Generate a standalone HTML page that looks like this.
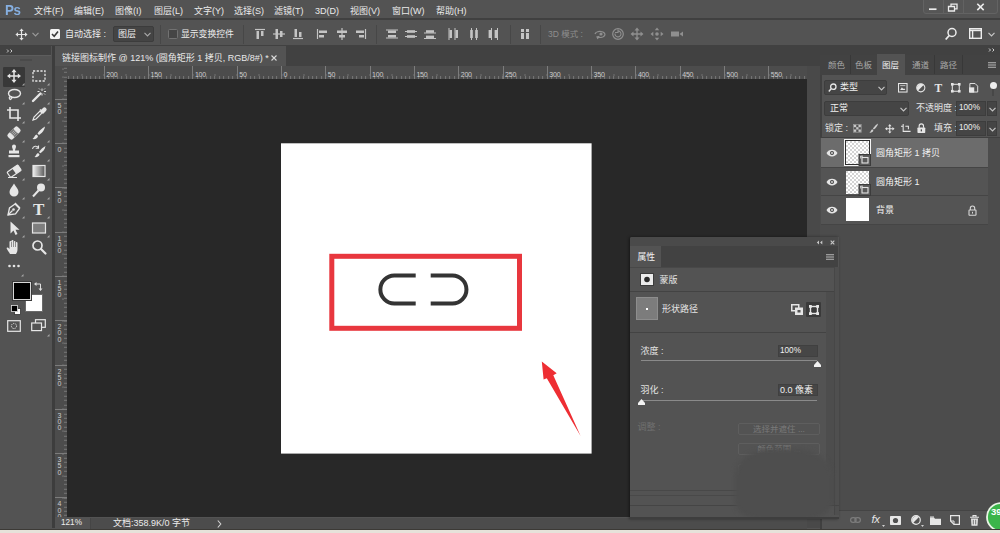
<!DOCTYPE html>
<html lang="zh-CN">
<head>
<meta charset="utf-8">
<title>链接图标制作</title>
<style>
*{box-sizing:border-box;margin:0;padding:0}
html,body{width:1000px;height:533px;overflow:hidden;background:#535353}
body{position:relative;font-family:"Liberation Sans","Noto Sans CJK SC",sans-serif;font-size:11px;color:#e0e0e0;-webkit-font-smoothing:antialiased}
.abs{position:absolute}
.t{position:absolute;white-space:nowrap;line-height:1}
svg{position:absolute;overflow:visible}
/* ---------- menubar ---------- */
#menubar{left:0;top:0;width:1000px;height:20px;background:#535353;border-bottom:2px solid #404040}
#menubar .t{top:6.500px;font-size:9px;color:#eaeaea}
#pslogo{left:5px;top:2px !important;font-size:15.500px !important;font-weight:bold;color:#86afe0 !important;letter-spacing:-0.5px;transform:scaleX(.86);transform-origin:0 0}
.winbtn{top:0;width:24px;height:15px;background:#5b5b5b;border-left:1px solid #4a4a4a}
/* ---------- options ---------- */
#options{left:0;top:20px;width:1000px;height:26px;background:#535353;border-bottom:1.500px solid #414141}
/* ---------- tab bar ---------- */
#tabbar{left:55px;top:46px;width:752px;height:21px;background:#414141}
#doctab{left:0;top:0;width:231px;height:21px;background:#535353}
/* ---------- tools ---------- */
#tools{left:0;top:46px;width:55px;height:482px;background:#535353}
/* ---------- canvas ---------- */
#hruler{left:55px;top:66px;width:752px;height:13px;background:#4c4c4c;overflow:hidden}
#vruler{left:55px;top:66px;width:12px;height:451px;background:#4c4c4c;overflow:hidden}
.rl{font-size:7px;color:#cdcdcd;letter-spacing:-0.2px}
.hticks{left:0;top:10px;width:752px;height:3px;background:repeating-linear-gradient(90deg,#767676 0,#767676 1px,transparent 1px,transparent 4.43px);background-position:0.1px 0}
.hticks2{left:0;top:8px;width:752px;height:2px;background:repeating-linear-gradient(90deg,#707070 0,#707070 1px,transparent 1px,transparent 22.15px);background-position:4.5px 0}
.vticks{left:9px;top:0;width:3px;height:451px;background:repeating-linear-gradient(180deg,#767676 0,#767676 1px,transparent 1px,transparent 4.43px);background-position:0 1.8px}
.vticks2{left:7px;top:0;width:2px;height:451px;background:repeating-linear-gradient(180deg,#707070 0,#707070 1px,transparent 1px,transparent 22.15px);background-position:0 10.600px}
#paste{left:67px;top:79px;width:740px;height:438px;background:#282828}
#doc{left:281px;top:144px;width:310px;height:309px;background:#fff}
#status{left:55px;top:517.500px;width:752px;height:11px;background:#4c4c4c}
#bottom{left:0;top:528.500px;width:1000px;height:5px;background:#e6e2da;border-top:1.500px solid #3c3a36}
/* ---------- right dock ---------- */
#gap{left:807px;top:46px;width:13px;height:482px;background:#494949}
#dock{left:820px;top:46px;width:180px;height:482px;background:#535353}
.dt{top:15px;font-size:8.500px;color:#a9a9a9}
/* ---------- properties ---------- */
#props{left:630px;top:237px;width:209px;overflow:hidden;border-radius:2px 0 0 0;height:281.500px;background:#535353;border-bottom:2px solid #3e3e3e;box-shadow:-1px 0 3px rgba(0,0,0,.45)}
.btn{width:82px;height:12px;border:1px solid #5e5e5e;border-radius:2px;font-size:8.500px;line-height:10px;text-align:center;color:#7a7a7a;white-space:nowrap}
</style>
</head>
<body>
<div id="menubar" class="abs">
<span class="t" id="pslogo">Ps</span>
<span class="t" style="left:34px">文件(F)</span>
<span class="t" style="left:74px">编辑(E)</span>
<span class="t" style="left:115px">图像(I)</span>
<span class="t" style="left:154px">图层(L)</span>
<span class="t" style="left:194px">文字(Y)</span>
<span class="t" style="left:234px">选择(S)</span>
<span class="t" style="left:274px">滤镜(T)</span>
<span class="t" style="left:315px">3D(D)</span>
<span class="t" style="left:350px">视图(V)</span>
<span class="t" style="left:392px">窗口(W)</span>
<span class="t" style="left:436px">帮助(H)</span>
<div class="abs" style="left:922.500px;top:-1px;width:75px;height:15px;border:1px solid #636363;border-radius:0 0 3px 3px;background:#565656"></div>
<div class="abs" style="left:943px;top:0;width:1px;height:14px;background:#626262"></div>
<div class="abs" style="left:963px;top:0;width:1px;height:14px;background:#626262"></div>
<svg style="left:923px;top:0" width="75" height="15" viewBox="923 0 75 15"><path d="M929 9.200h7.500" stroke="#ececec" stroke-width="1.700" fill="none"/><path d="M948.500 6.500h6v4.500h-6zM951 6.500v-2.300h6v4.600h-2.500" stroke="#ececec" stroke-width="1.300" fill="none"/><path d="M977.300 3.700l6.400 6.400M983.700 3.700l-6.400 6.400" stroke="#ececec" stroke-width="1.600" fill="none"/></svg>
</div>
<div id="options" class="abs"><div class="abs" style="left:0;top:0.500px;width:1000px;height:24px">
<svg style="left:15px;top:7px" width="13" height="13" viewBox="0 0 15 15"><path d="M7.5 0.500l2.500 3h-5zM7.500 14.500l2.500-3h-5zM0.500 7.500l3-2.500v5zM14.500 7.500l-3-2.500v5z" fill="#e4e4e4"/><path d="M7.500 3v9M3 7.500h9" stroke="#e4e4e4" stroke-width="1.400"/></svg>
<svg style="left:32px;top:11px" width="7" height="5" viewBox="0 0 7 5"><path d="M0.500 0.800l3 3 3-3" stroke="#9a9a9a" stroke-width="1.200" fill="none"/></svg>
<div class="abs" style="left:50px;top:8px;width:10px;height:10px;background:#f4f4f4;border-radius:1.500px"></div>
<svg style="left:50px;top:8px" width="10" height="10" viewBox="0 0 10 10"><path d="M2 5l2.200 2.300l3.800-4.800" stroke="#3a3a3a" stroke-width="1.600" fill="none"/></svg>
<span class="t" style="left:65px;top:9px;font-size:9px;color:#ededed">自动选择 :</span>
<div class="abs" style="left:113px;top:5px;width:41px;height:16px;background:#444;border:1px solid #3c3c3c;border-radius:2px"></div>
<span class="t" style="left:118px;top:9px;font-size:9px;color:#ededed">图层</span>
<svg style="left:144px;top:11px" width="7" height="5" viewBox="0 0 7 5"><path d="M0.500 0.800l3 3 3-3" stroke="#a8a8a8" stroke-width="1.200" fill="none"/></svg>
<div class="abs" style="left:160px;top:4px;width:1px;height:19px;background:#474747"></div>
<div class="abs" style="left:168px;top:8px;width:10px;height:10px;background:#454545;border:1px solid #727272;border-radius:1.500px"></div>
<span class="t" style="left:181px;top:9px;font-size:8.800px;color:#ededed">显示变换控件</span>
<div class="abs" style="left:243px;top:4px;width:1px;height:19px;background:#474747"></div>
<div class="abs" style="left:376px;top:4px;width:1px;height:19px;background:#474747"></div>
<div class="abs" style="left:510px;top:4px;width:1px;height:19px;background:#474747"></div>
<div class="abs" style="left:540px;top:4px;width:1px;height:19px;background:#474747"></div>
<svg style="left:253px;top:6px" width="14" height="14" viewBox="0 0 14 14"><path d="M2 2.5h10" stroke="#c4c4c4" stroke-width="1.2"/><rect x="3.5" y="4" width="2.5" height="8" fill="#c4c4c4"/><rect x="8" y="4" width="2.5" height="5" fill="#c4c4c4"/></svg><svg style="left:272px;top:6px" width="14" height="14" viewBox="0 0 14 14"><path d="M1 7h12" stroke="#c4c4c4" stroke-width="1.2"/><rect x="3.5" y="2" width="2.5" height="10" fill="#c4c4c4"/><rect x="8" y="4" width="2.5" height="6" fill="#c4c4c4"/></svg><svg style="left:291px;top:6px" width="14" height="14" viewBox="0 0 14 14"><path d="M2 11.5h10" stroke="#c4c4c4" stroke-width="1.2"/><rect x="3.5" y="2" width="2.5" height="8" fill="#c4c4c4"/><rect x="8" y="5" width="2.5" height="5" fill="#c4c4c4"/></svg><svg style="left:315px;top:6px" width="14" height="14" viewBox="0 0 14 14"><path d="M2.5 2v10" stroke="#c4c4c4" stroke-width="1.2"/><rect x="4" y="3.5" width="8" height="2.5" fill="#c4c4c4"/><rect x="4" y="8" width="5" height="2.5" fill="#c4c4c4"/></svg><svg style="left:335px;top:6px" width="14" height="14" viewBox="0 0 14 14"><path d="M7 1v12" stroke="#c4c4c4" stroke-width="1.2"/><rect x="2" y="3.5" width="10" height="2.5" fill="#c4c4c4"/><rect x="4" y="8" width="6" height="2.5" fill="#c4c4c4"/></svg><svg style="left:354px;top:6px" width="14" height="14" viewBox="0 0 14 14"><path d="M11.5 2v10" stroke="#c4c4c4" stroke-width="1.2"/><rect x="2" y="3.5" width="8" height="2.5" fill="#c4c4c4"/><rect x="5" y="8" width="5" height="2.5" fill="#c4c4c4"/></svg><svg style="left:385px;top:6px" width="14" height="14" viewBox="0 0 14 14"><path d="M1 3h12M1 11h12" stroke="#c4c4c4" stroke-width="1"/><rect x="3" y="3.5" width="8" height="2.5" fill="#c4c4c4"/><rect x="3" y="8" width="8" height="2.5" fill="#c4c4c4"/></svg><svg style="left:404px;top:6px" width="14" height="14" viewBox="0 0 14 14"><path d="M1 4.5h12M1 9.5h12" stroke="#c4c4c4" stroke-width="1"/><rect x="3" y="3.2" width="8" height="2.6" fill="#c4c4c4"/><rect x="3" y="8.2" width="8" height="2.6" fill="#c4c4c4"/></svg><svg style="left:423px;top:6px" width="14" height="14" viewBox="0 0 14 14"><path d="M1 6h12M1 11.5h12" stroke="#c4c4c4" stroke-width="1"/><rect x="3" y="3.2" width="8" height="2.6" fill="#c4c4c4"/><rect x="3" y="8.6" width="8" height="2.6" fill="#c4c4c4"/></svg><svg style="left:446px;top:6px" width="14" height="14" viewBox="0 0 14 14"><path d="M3 1v12M9 1v12" stroke="#c4c4c4" stroke-width="1"/><rect x="3.5" y="3" width="2.5" height="8" fill="#c4c4c4"/><rect x="9.5" y="3" width="2.5" height="8" fill="#c4c4c4"/></svg><svg style="left:467px;top:6px" width="14" height="14" viewBox="0 0 14 14"><path d="M4.5 1v12M9.5 1v12" stroke="#c4c4c4" stroke-width="1"/><rect x="3.2" y="3" width="2.6" height="8" fill="#c4c4c4"/><rect x="8.2" y="3" width="2.6" height="8" fill="#c4c4c4"/></svg><svg style="left:486px;top:6px" width="14" height="14" viewBox="0 0 14 14"><path d="M5.5 1v12M11.5 1v12" stroke="#c4c4c4" stroke-width="1"/><rect x="2.6" y="3" width="2.6" height="8" fill="#c4c4c4"/><rect x="8.6" y="3" width="2.6" height="8" fill="#c4c4c4"/></svg><svg style="left:518px;top:6px" width="14" height="14" viewBox="0 0 14 14"><rect x="3" y="2" width="3" height="3" fill="#c4c4c4"/><rect x="8" y="2" width="3" height="3" fill="#c4c4c4"/><rect x="3" y="6" width="3" height="6" fill="#c4c4c4"/><rect x="8" y="6" width="3" height="6" fill="#c4c4c4"/></svg><svg style="left:593px;top:6px" width="14" height="14" viewBox="0 0 14 14"><path d="M2 7a5 3 0 1 1 3 3.2M5 12l-1-2 2.3-.6" stroke="#8f8f8f" stroke-width="1.2" fill="none"/><circle cx="8" cy="7" r="1.6" fill="#8f8f8f"/></svg><svg style="left:611px;top:6px" width="14" height="14" viewBox="0 0 14 14"><circle cx="7" cy="7" r="5.3" stroke="#8f8f8f" stroke-width="1.2" fill="none"/><path d="M4 6.5a3 3 0 1 0 3-2.6M7 2.5v3h-3" stroke="#8f8f8f" stroke-width="1.1" fill="none"/></svg><svg style="left:630px;top:6px" width="14" height="14" viewBox="0 0 14 14"><path d="M7 0.5l2.5 3h-5zM7 13.5l2.5-3h-5zM0.5 7l3-2.5v5zM13.5 7l-3-2.5v5z" fill="#8f8f8f"/><path d="M7 3v8M3 7h8" stroke="#8f8f8f" stroke-width="1.3"/></svg><svg style="left:650px;top:6px" width="14" height="14" viewBox="0 0 14 14"><path d="M7 0.5l2.2 2.8h-4.4zM7 13.5l2.2-2.8h-4.4zM0.5 7l2.8-2.2v4.4zM13.500 7l-2.800-2.200v4.400z" fill="#8f8f8f"/><circle cx="7" cy="7" r="1.8" fill="#8f8f8f"/></svg><svg style="left:670px;top:6px" width="14" height="14" viewBox="0 0 14 14"><path d="M1 4.500h8v5h-8z" fill="#8f8f8f"/><path d="M9.500 7l3.500-2.500v5z" fill="#8f8f8f"/></svg>
<span class="t" style="left:548px;top:9px;font-size:8.500px;color:#8e8e8e">3D 模式 :</span>
<svg style="left:944px;top:6px" width="14" height="14" viewBox="0 0 14 14"><circle cx="8" cy="5.500" r="4" stroke="#ececec" stroke-width="1.500" fill="none"/><path d="M5.200 8.500l-3.500 4" stroke="#ececec" stroke-width="1.800"/></svg>
<svg style="left:969px;top:7px" width="13" height="12" viewBox="0 0 13 12"><rect x="0.700" y="0.700" width="11.600" height="9.600" stroke="#ececec" stroke-width="1.400" fill="none"/><path d="M1 2.400h11" stroke="#ececec" stroke-width="1.600"/><path d="M3.600 2v8" stroke="#ececec" stroke-width="1.400"/></svg>
<svg style="left:988px;top:11px" width="7" height="5" viewBox="0 0 7 5"><path d="M0.500 0.800l3 3 3-3" stroke="#c8c8c8" stroke-width="1.200" fill="none"/></svg>
</div></div>
<div id="tools" class="abs">
<div class="abs" style="left:0;top:0;width:51px;height:9px;background:#424242"></div>
<svg style="left:6px;top:3px" width="8" height="4" viewBox="0 0 8 4"><path d="M1 0.500l1.500 1.500l-1.500 1.500M4.500 0.500l1.500 1.500l-1.500 1.500" stroke="#c8c8c8" stroke-width="1" fill="none"/></svg>
<div class="abs" style="left:0;top:9px;width:51px;height:1px;background:#5d5d5d"></div>
<div class="abs" style="left:20px;top:13px;width:12px;height:2px;background:#4a4a4a"></div>
<div class="abs" style="left:3px;top:21px;width:22px;height:20px;background:#383838;border-radius:1px"></div>
<svg style="left:6.0px;top:22.0px" width="16" height="16" viewBox="0 0 16 16"><path d="M8 1l2.600 3.200h-5.200zM8 15l2.600-3.200h-5.200zM1 8l3.200-2.600v5.200zM15 8l-3.200-2.600v5.200z" fill="#e6e6e6"/><path d="M8 3.500v9M3.500 8h9" stroke="#e6e6e6" stroke-width="1.500"/></svg><svg style="left:31.0px;top:22.0px" width="16" height="16" viewBox="0 0 16 16"><rect x="2" y="3" width="12" height="10" stroke="#e6e6e6" stroke-width="1.300" fill="none" stroke-dasharray="2.200 1.500"/></svg><svg style="left:6.0px;top:41.0px" width="16" height="16" viewBox="0 0 16 16"><ellipse cx="8.500" cy="6.500" rx="6" ry="4" stroke="#e6e6e6" stroke-width="1.400" fill="none"/><path d="M4.500 9.500c-1.500 1-1.500 3 0.500 3.200M4.500 9.500a1.300 1.300 0 1 0 0.100 0" stroke="#e6e6e6" stroke-width="1.200" fill="none"/></svg><svg style="left:31.0px;top:41.0px" width="16" height="16" viewBox="0 0 16 16"><path d="M2 14l7.500-7.500" stroke="#e6e6e6" stroke-width="2.400" stroke-linecap="round"/><path d="M11 1.500v2.500M11 6.500v2M8.500 4.500h-2M13 4.500h2M13 2.500l1-1M13 6.500l1 1M9 2.500l-1-1" stroke="#e6e6e6" stroke-width="1"/></svg><svg style="left:6.0px;top:60.0px" width="16" height="16" viewBox="0 0 16 16"><path d="M4 1v11h11M1 4h11v11" stroke="#e6e6e6" stroke-width="1.600" fill="none"/></svg><svg style="left:31.0px;top:60.0px" width="16" height="16" viewBox="0 0 16 16"><path d="M2 14l1-3 6-6 2 2-6 6z" stroke="#e6e6e6" stroke-width="1.200" fill="none"/><path d="M9 3.500l3.500 3.500M10 5l2.500-2.500a1.400 1.400 0 0 1 2 2l-2.500 2.500z" stroke="#e6e6e6" stroke-width="1.400" fill="#e6e6e6"/></svg><svg style="left:6.0px;top:79.0px" width="16" height="16" viewBox="0 0 16 16"><g transform="rotate(-45 8 8)"><rect x="1" y="4.500" width="14" height="7" rx="2" fill="#e6e6e6"/><rect x="5.500" y="4.500" width="5" height="7" fill="#777"/><path d="M6.500 6.500h0.010M8 6.500h0.010M9.500 6.500h0.010M6.500 8h0.010M8 8h0.010M9.500 8h0.010M6.500 9.500h0.010M8 9.500h0.010M9.500 9.500h0.010" stroke="#e6e6e6" stroke-width="0.900" stroke-linecap="round"/></g></svg><svg style="left:31.0px;top:79.0px" width="16" height="16" viewBox="0 0 16 16"><path d="M14 1.500c-3 1.500-6 4.500-7.500 7l1.500 1.500c2.500-1.500 5.500-4.500 6-8.500z" fill="#e6e6e6"/><path d="M5.500 9.500c-2 0.500-2 3-4 4.500c2.500 0.500 5.500-0.500 5.500-3z" fill="#e6e6e6"/></svg><svg style="left:6.0px;top:98.0px" width="16" height="16" viewBox="0 0 16 16"><path d="M6 2.500a2 2 0 0 1 4 0c0 1.500-1 2.500-1 4h4v3h-10v-3h4c0-1.500-1-2.500-1-4z" fill="#e6e6e6"/><rect x="2.500" y="11" width="11" height="2.200" fill="#e6e6e6"/></svg><svg style="left:31.0px;top:98.0px" width="16" height="16" viewBox="0 0 16 16"><path d="M14.500 2c-2.500 1.200-5 3.800-6.500 6l1.300 1.300c2.200-1.300 4.700-3.800 5.200-7.300z" fill="#e6e6e6"/><path d="M7 9c-1.800 0.500-1.800 2.800-3.500 4c2.200 0.500 5-0.500 5-2.700z" fill="#e6e6e6"/><path d="M1.500 5a3.200 3.200 0 0 1 6 -1M7.500 1.500v2.800h-2.800" stroke="#e6e6e6" stroke-width="1.100" fill="none"/></svg><svg style="left:6.0px;top:117.0px" width="16" height="16" viewBox="0 0 16 16"><g transform="rotate(-35 8 8)"><rect x="1.500" y="5" width="13" height="6.500" rx="1" stroke="#e6e6e6" stroke-width="1.200" fill="none"/><rect x="8" y="5" width="6.500" height="6.500" fill="#e6e6e6"/></g><path d="M2 14.500h9" stroke="#e6e6e6" stroke-width="1"/></svg><svg style="left:31.0px;top:117.0px" width="16" height="16" viewBox="0 0 16 16"><defs><linearGradient id="gg" x1="0" x2="1"><stop offset="0" stop-color="#f0f0f0"/><stop offset="1" stop-color="#555"/></linearGradient></defs><rect x="2" y="2.500" width="12" height="11" fill="url(#gg)" stroke="#e6e6e6" stroke-width="1.200"/></svg><svg style="left:6.0px;top:136.0px" width="16" height="16" viewBox="0 0 16 16"><path d="M8 1.500c2 3.500 4.500 5.500 4.500 8.500a4.500 4.500 0 0 1-9 0c0-3 2.500-5 4.500-8.500z" fill="#e6e6e6"/></svg><svg style="left:31.0px;top:136.0px" width="16" height="16" viewBox="0 0 16 16"><circle cx="10" cy="5.500" r="4" fill="#e6e6e6"/><path d="M7.500 8.500l-5.500 6" stroke="#e6e6e6" stroke-width="2"/></svg><svg style="left:6.0px;top:155.0px" width="16" height="16" viewBox="0 0 16 16"><path d="M2 14l1.500-7 5.500-4 4.500 4.500-4 5.500z" stroke="#e6e6e6" stroke-width="1.300" fill="none"/><circle cx="7.500" cy="8.500" r="1.300" fill="#e6e6e6"/><path d="M2 14l4.500-4.500M9 2l5 5" stroke="#e6e6e6" stroke-width="1.300"/></svg><span class="t" style="left:33px;top:155px;font-family:'Liberation Serif',serif;font-weight:bold;font-size:17px;color:#e6e6e6">T</span><svg style="left:6.0px;top:174.0px" width="16" height="16" viewBox="0 0 16 16"><path d="M4.500 1.500v12l3-3 2 4.500 2-1-2-4.300h4z" fill="#e6e6e6"/></svg><svg style="left:31.0px;top:174.0px" width="16" height="16" viewBox="0 0 16 16"><rect x="1.500" y="3" width="13" height="10" fill="#7e7e7e" stroke="#e6e6e6" stroke-width="1.200"/></svg><svg style="left:6.0px;top:193.0px" width="16" height="16" viewBox="0 0 16 16"><path d="M4 15c-1-2-2.500-3.500-3.500-6c0.800-1 2-0.500 3 1v-7a1 1 0 0 1 2 0v-1a1 1 0 0 1 2 0v1a1 1 0 0 1 2 0v1a1 1 0 0 1 2 0v6c0 2-0.500 3.500-1.500 5z" fill="#e6e6e6"/><path d="M5.500 3v5M7.500 2v6M9.500 3v5" stroke="#535353" stroke-width="0.600"/></svg><svg style="left:31.0px;top:193.0px" width="16" height="16" viewBox="0 0 16 16"><circle cx="6.500" cy="6.500" r="4.500" stroke="#e6e6e6" stroke-width="1.700" fill="none"/><path d="M10 10l4.500 4.500" stroke="#e6e6e6" stroke-width="2.200" stroke-linecap="round"/></svg><svg style="left:22px;top:37px" width="2.500" height="2.500" viewBox="0 0 3 3"><path d="M3 0v3h-3z" fill="#a8a8a8"/></svg><svg style="left:47px;top:37px" width="2.500" height="2.500" viewBox="0 0 3 3"><path d="M3 0v3h-3z" fill="#a8a8a8"/></svg><svg style="left:22px;top:56px" width="2.500" height="2.500" viewBox="0 0 3 3"><path d="M3 0v3h-3z" fill="#a8a8a8"/></svg><svg style="left:47px;top:56px" width="2.500" height="2.500" viewBox="0 0 3 3"><path d="M3 0v3h-3z" fill="#a8a8a8"/></svg><svg style="left:22px;top:75px" width="2.500" height="2.500" viewBox="0 0 3 3"><path d="M3 0v3h-3z" fill="#a8a8a8"/></svg><svg style="left:47px;top:75px" width="2.500" height="2.500" viewBox="0 0 3 3"><path d="M3 0v3h-3z" fill="#a8a8a8"/></svg><svg style="left:22px;top:94px" width="2.500" height="2.500" viewBox="0 0 3 3"><path d="M3 0v3h-3z" fill="#a8a8a8"/></svg><svg style="left:47px;top:94px" width="2.500" height="2.500" viewBox="0 0 3 3"><path d="M3 0v3h-3z" fill="#a8a8a8"/></svg><svg style="left:22px;top:113px" width="2.500" height="2.500" viewBox="0 0 3 3"><path d="M3 0v3h-3z" fill="#a8a8a8"/></svg><svg style="left:47px;top:113px" width="2.500" height="2.500" viewBox="0 0 3 3"><path d="M3 0v3h-3z" fill="#a8a8a8"/></svg><svg style="left:22px;top:132px" width="2.500" height="2.500" viewBox="0 0 3 3"><path d="M3 0v3h-3z" fill="#a8a8a8"/></svg><svg style="left:47px;top:132px" width="2.500" height="2.500" viewBox="0 0 3 3"><path d="M3 0v3h-3z" fill="#a8a8a8"/></svg><svg style="left:22px;top:151px" width="2.500" height="2.500" viewBox="0 0 3 3"><path d="M3 0v3h-3z" fill="#a8a8a8"/></svg><svg style="left:47px;top:151px" width="2.500" height="2.500" viewBox="0 0 3 3"><path d="M3 0v3h-3z" fill="#a8a8a8"/></svg><svg style="left:22px;top:170px" width="2.500" height="2.500" viewBox="0 0 3 3"><path d="M3 0v3h-3z" fill="#a8a8a8"/></svg><svg style="left:47px;top:170px" width="2.500" height="2.500" viewBox="0 0 3 3"><path d="M3 0v3h-3z" fill="#a8a8a8"/></svg><svg style="left:22px;top:189px" width="2.500" height="2.500" viewBox="0 0 3 3"><path d="M3 0v3h-3z" fill="#a8a8a8"/></svg><svg style="left:47px;top:189px" width="2.500" height="2.500" viewBox="0 0 3 3"><path d="M3 0v3h-3z" fill="#a8a8a8"/></svg><svg style="left:8px;top:218px" width="12" height="4" viewBox="0 0 12 4"><circle cx="1.500" cy="2" r="1.300" fill="#e6e6e6"/><circle cx="6" cy="2" r="1.300" fill="#e6e6e6"/><circle cx="10.500" cy="2" r="1.300" fill="#e6e6e6"/></svg><svg style="left:21px;top:228px" width="2.500" height="2.500" viewBox="0 0 3 3"><path d="M3 0v3h-3z" fill="#a8a8a8"/></svg>
<div class="abs" style="left:24.500px;top:247.500px;width:18px;height:18px;background:#fff;border:1px solid #6a6a6a"></div>
<div class="abs" style="left:13px;top:236px;width:18px;height:18px;background:#000;border:1px solid #d9d9d9;box-shadow:0 0 0 1px #3a3a3a"></div>
<svg style="left:34px;top:236px" width="9" height="9" viewBox="0 0 9 9"><path d="M1.500 2h5v5" stroke="#e0e0e0" stroke-width="1" fill="none"/><path d="M0 2l2.500-2v4zM6.500 9l-2-2.500h4z" fill="#e0e0e0"/></svg>
<svg style="left:11px;top:259px" width="10" height="10" viewBox="0 0 10 10"><rect x="3.500" y="3.500" width="6" height="6" fill="#fff" stroke="#333" stroke-width="0.800"/><rect x="0.500" y="0.500" width="6" height="6" fill="#000" stroke="#ddd" stroke-width="0.800"/></svg>
<svg style="left:7px;top:274px" width="14" height="12" viewBox="0 0 14 12"><rect x="0.700" y="0.700" width="12.600" height="10.600" stroke="#e6e6e6" stroke-width="1.200" fill="none"/><circle cx="7" cy="6" r="2.600" stroke="#e6e6e6" stroke-width="1" fill="none" stroke-dasharray="1.200 1"/></svg>
<svg style="left:31px;top:273px" width="15" height="13" viewBox="0 0 15 13"><rect x="4.500" y="0.700" width="9.800" height="7.600" stroke="#e6e6e6" stroke-width="1.200" fill="none"/><rect x="0.700" y="4" width="9.800" height="7.600" stroke="#e6e6e6" stroke-width="1.200" fill="#535353"/></svg>
<svg style="left:47px;top:288px" width="2.500" height="2.500" viewBox="0 0 3 3"><path d="M3 0v3h-3z" fill="#a8a8a8"/></svg>
<div class="abs" style="left:52px;top:0;width:3px;height:482px;background:#3d3d3d"></div>
</div>
<div id="tabbar" class="abs"><div id="doctab" class="abs"><span class="t" style="left:7px;top:7.500px;font-size:9px;color:#e9e9e9">链接图标制作 @ 121% (圆角矩形 1 拷贝, RGB/8#) *</span><svg style="left:216px;top:8.500px" width="6" height="6" viewBox="0 0 6 6"><path d="M0.500 0.500l5 5M5.500 0.500l-5 5" stroke="#d8d8d8" stroke-width="1.100"/></svg></div></div>
<div id="paste" class="abs"></div>
<div id="hruler" class="abs"><div class="abs hticks"></div><div class="abs hticks2"></div><div class="abs" style="left:48.8px;top:0;width:1px;height:13px;background:#7c7c7c"></div><span class="t rl" style="left:51.3px;top:4.500px">200</span><div class="abs" style="left:93.1px;top:0;width:1px;height:13px;background:#7c7c7c"></div><span class="t rl" style="left:95.6px;top:4.500px">150</span><div class="abs" style="left:137.4px;top:0;width:1px;height:13px;background:#7c7c7c"></div><span class="t rl" style="left:139.9px;top:4.500px">100</span><div class="abs" style="left:181.7px;top:0;width:1px;height:13px;background:#7c7c7c"></div><span class="t rl" style="left:184.2px;top:4.500px">50</span><div class="abs" style="left:226.0px;top:0;width:1px;height:13px;background:#7c7c7c"></div><span class="t rl" style="left:228.5px;top:4.500px">0</span><div class="abs" style="left:270.3px;top:0;width:1px;height:13px;background:#7c7c7c"></div><span class="t rl" style="left:272.8px;top:4.500px">50</span><div class="abs" style="left:314.6px;top:0;width:1px;height:13px;background:#7c7c7c"></div><span class="t rl" style="left:317.1px;top:4.500px">100</span><div class="abs" style="left:358.9px;top:0;width:1px;height:13px;background:#7c7c7c"></div><span class="t rl" style="left:361.4px;top:4.500px">150</span><div class="abs" style="left:403.2px;top:0;width:1px;height:13px;background:#7c7c7c"></div><span class="t rl" style="left:405.7px;top:4.500px">200</span><div class="abs" style="left:447.5px;top:0;width:1px;height:13px;background:#7c7c7c"></div><span class="t rl" style="left:450.0px;top:4.500px">250</span><div class="abs" style="left:491.8px;top:0;width:1px;height:13px;background:#7c7c7c"></div><span class="t rl" style="left:494.3px;top:4.500px">300</span><div class="abs" style="left:536.1px;top:0;width:1px;height:13px;background:#7c7c7c"></div><span class="t rl" style="left:538.6px;top:4.500px">350</span><div class="abs" style="left:580.4px;top:0;width:1px;height:13px;background:#7c7c7c"></div><span class="t rl" style="left:582.9px;top:4.500px">400</span><div class="abs" style="left:624.7px;top:0;width:1px;height:13px;background:#7c7c7c"></div><span class="t rl" style="left:627.2px;top:4.500px">450</span><div class="abs" style="left:669.0px;top:0;width:1px;height:13px;background:#7c7c7c"></div><span class="t rl" style="left:671.5px;top:4.500px">500</span><div class="abs" style="left:713.3px;top:0;width:1px;height:13px;background:#7c7c7c"></div><span class="t rl" style="left:715.8px;top:4.500px">550</span><div class="abs" style="left:0;top:0;width:12px;height:13px;background:#4e4e4e;border-right:1px dotted #777;border-bottom:1px dotted #777"></div></div>
<div id="vruler" class="abs"><div class="abs vticks"></div><div class="abs vticks2"></div><div class="abs" style="left:0;top:32.7px;width:12px;height:1px;background:#7c7c7c"></div><span class="t rl" style="left:2.5px;top:35.7px">5</span><span class="t rl" style="left:2.5px;top:41.9px">0</span><div class="abs" style="left:0;top:77.0px;width:12px;height:1px;background:#7c7c7c"></div><span class="t rl" style="left:2.5px;top:80.0px">0</span><div class="abs" style="left:0;top:121.3px;width:12px;height:1px;background:#7c7c7c"></div><span class="t rl" style="left:2.5px;top:124.3px">5</span><span class="t rl" style="left:2.5px;top:130.5px">0</span><div class="abs" style="left:0;top:165.6px;width:12px;height:1px;background:#7c7c7c"></div><span class="t rl" style="left:2.5px;top:168.6px">1</span><span class="t rl" style="left:2.5px;top:174.8px">0</span><span class="t rl" style="left:2.5px;top:181.0px">0</span><div class="abs" style="left:0;top:209.9px;width:12px;height:1px;background:#7c7c7c"></div><span class="t rl" style="left:2.5px;top:212.9px">1</span><span class="t rl" style="left:2.5px;top:219.1px">5</span><span class="t rl" style="left:2.5px;top:225.3px">0</span><div class="abs" style="left:0;top:254.2px;width:12px;height:1px;background:#7c7c7c"></div><span class="t rl" style="left:2.5px;top:257.2px">2</span><span class="t rl" style="left:2.5px;top:263.4px">0</span><span class="t rl" style="left:2.5px;top:269.6px">0</span><div class="abs" style="left:0;top:298.5px;width:12px;height:1px;background:#7c7c7c"></div><span class="t rl" style="left:2.5px;top:301.5px">2</span><span class="t rl" style="left:2.5px;top:307.7px">5</span><span class="t rl" style="left:2.5px;top:313.9px">0</span><div class="abs" style="left:0;top:342.8px;width:12px;height:1px;background:#7c7c7c"></div><span class="t rl" style="left:2.5px;top:345.8px">3</span><span class="t rl" style="left:2.5px;top:352.0px">0</span><span class="t rl" style="left:2.5px;top:358.2px">0</span><div class="abs" style="left:0;top:387.1px;width:12px;height:1px;background:#7c7c7c"></div><span class="t rl" style="left:2.5px;top:390.1px">3</span><span class="t rl" style="left:2.5px;top:396.3px">5</span><span class="t rl" style="left:2.5px;top:402.5px">0</span><div class="abs" style="left:0;top:431.4px;width:12px;height:1px;background:#7c7c7c"></div><span class="t rl" style="left:2.5px;top:434.4px">4</span><span class="t rl" style="left:2.5px;top:440.6px">0</span><span class="t rl" style="left:2.5px;top:446.8px">0</span></div>
<div id="doc" class="abs"></div>
<svg style="left:0;top:0" width="1000" height="533" viewBox="0 0 1000 533">
<rect x="281" y="143.300" width="310.600" height="310.300" fill="#fff"/>
<rect x="331.800" y="256.300" width="187.700" height="72" fill="none" stroke="#e8373e" stroke-width="5"/>
<path d="M415.700 275.600H394.300A13.950 13.950 0 0 0 394.300 303.500H415.700" fill="none" stroke="#343434" stroke-width="4"/>
<path d="M430.700 275.600H452.500A13.950 13.950 0 0 1 452.500 303.500H430.700" fill="none" stroke="#343434" stroke-width="4"/>
<path d="M541.800 361.400L556.700 373.300L553.300 375.300L580.600 436L546.800 378.300L543.600 379.600Z" fill="#ee2e33"/>
</svg>
<div id="status" class="abs">
<div class="abs" style="left:0;top:0;width:36px;height:11px;background:#535353;border-right:1px solid #454545"></div>
<span class="t" style="left:6px;top:1px;font-size:8.200px;color:#ececec">121%</span>
<span class="t" style="left:58px;top:1px;font-size:9px;color:#ececec">文档:358.9K/0 字节</span>
<svg style="left:162px;top:2px" width="5" height="8" viewBox="0 0 5 8"><path d="M0.800 0.500l3 3.500l-3 3.500" stroke="#d4d4d4" stroke-width="1.100" fill="none"/></svg>
</div>
<div id="gap" class="abs"><div class="abs" style="left:0;top:0;width:13px;height:20px;background:#414141"></div></div>
<div id="dock" class="abs"><div class="abs" style="left:0;top:9.500px;width:2px;height:473px;background:#404040"></div>
<div class="abs" style="left:0;top:0;width:180px;height:9.500px;background:#414141"></div>
<svg style="left:168px;top:2px" width="8" height="4" viewBox="0 0 8 4"><path d="M1 0.500l1.500 1.500l-1.500 1.500M4.500 0.500l1.500 1.500l-1.500 1.500" stroke="#d0d0d0" stroke-width="1" fill="none"/></svg>
<div class="abs" style="left:0;top:9px;width:180px;height:20px;background:#424242"></div>
<div class="abs" style="left:30px;top:9px;width:1px;height:19px;background:#383838"></div>
<div class="abs" style="left:114px;top:9px;width:1px;height:19px;background:#383838"></div>
<div class="abs" style="left:142px;top:9px;width:1px;height:19px;background:#383838"></div>
<div class="abs" style="left:57px;top:8px;width:28px;height:22px;background:#535353"></div>
<span class="t dt" style="left:8px">颜色</span>
<span class="t dt" style="left:35px">色板</span>
<span class="t dt" style="left:62px;color:#f0f0f0">图层</span>
<span class="t dt" style="left:92px">通道</span>
<span class="t dt" style="left:120px">路径</span>
<svg style="left:168px;top:16px" width="8" height="6" viewBox="0 0 8 6"><path d="M0 0.700h8M0 3h8M0 5.300h8" stroke="#b8b8b8" stroke-width="1.100"/></svg>
<div class="abs" style="left:4px;top:34px;width:63px;height:15px;background:#454545;border:1px solid #3d3d3d;border-radius:2px"></div>
<svg style="left:8px;top:37px" width="9" height="9" viewBox="0 0 9 9"><circle cx="5.300" cy="3.700" r="2.700" stroke="#e6e6e6" stroke-width="1.300" fill="none"/><path d="M3.400 5.600l-2.600 2.800" stroke="#e6e6e6" stroke-width="1.400"/></svg>
<span class="t" style="left:20px;top:37px;font-size:9px;color:#f0f0f0">类型</span>
<svg style="left:58px;top:40px" width="7" height="5" viewBox="0 0 7 5"><path d="M0.500 0.800l3 3 3-3" stroke="#c4c4c4" stroke-width="1.200" fill="none"/></svg>
<svg style="left:78.31px;top:37.12px" width="9.57" height="9.57" viewBox="0 0 11 11"><rect x="0.600" y="0.600" width="9.800" height="9.800" stroke="#e6e6e6" stroke-width="1.200" fill="none"/><path d="M2.500 8l2-3 1.500 2 1-1 1.500 2z" fill="#e6e6e6"/><path d="M2.500 3h6" stroke="#e6e6e6" stroke-width="0.800"/></svg>
<svg style="left:96.31px;top:37.12px" width="9.57" height="9.57" viewBox="0 0 11 11"><circle cx="5.500" cy="5.500" r="4.700" stroke="#e6e6e6" stroke-width="1.200" fill="none"/><path d="M2.200 8.800a4.700 4.700 0 0 1 6.600-6.600z" fill="#e6e6e6"/></svg>
<span class="t" style="left:114.500px;top:37px;font-family:'Liberation Serif',serif;font-weight:bold;font-size:11.500px;color:#e6e6e6">T</span>
<svg style="left:131.31px;top:37.12px" width="9.57" height="9.57" viewBox="0 0 11 11"><rect x="1.500" y="1.500" width="8" height="8" stroke="#e6e6e6" stroke-width="1.200" fill="none"/><rect x="0" y="0" width="3" height="3" fill="#e6e6e6"/><rect x="8" y="0" width="3" height="3" fill="#e6e6e6"/><rect x="0" y="8" width="3" height="3" fill="#e6e6e6"/><rect x="8" y="8" width="3" height="3" fill="#e6e6e6"/></svg>
<svg style="left:149.31px;top:37.12px" width="9.57" height="9.57" viewBox="0 0 11 11"><path d="M1 0.600h6l3 3v6.800h-9z" stroke="#e6e6e6" stroke-width="1.100" fill="none"/><rect x="0" y="5" width="6" height="6" fill="#e6e6e6"/></svg>
<div class="abs" style="left:172px;top:42px;width:2px;height:8px;background:#474747"></div>
<div class="abs" style="left:169.5px;top:36px;width:7px;height:7px;border-radius:50%;background:#eee"></div>

<div class="abs" style="left:4px;top:55px;width:85px;height:15px;background:#454545;border:1px solid #3d3d3d;border-radius:2px"></div>
<span class="t" style="left:10px;top:58px;font-size:9px;color:#f0f0f0">正常</span>
<svg style="left:80px;top:61px" width="7" height="5" viewBox="0 0 7 5"><path d="M0.500 0.800l3 3 3-3" stroke="#c4c4c4" stroke-width="1.200" fill="none"/></svg>
<span class="t" style="left:96px;top:58px;font-size:9px;color:#e4e4e4">不透明度 :</span>
<div class="abs" style="left:136px;top:55px;width:30px;height:15px;background:#454545;border:1px solid #3d3d3d"></div>
<span class="t" style="left:139px;top:58px;font-size:8.200px;color:#f0f0f0">100%</span>
<div class="abs" style="left:167px;top:55px;width:10px;height:15px;background:#454545;border:1px solid #3d3d3d"></div>
<svg style="left:168.5px;top:61px" width="7" height="5" viewBox="0 0 7 5"><path d="M0.500 0.800l3 3 3-3" stroke="#c4c4c4" stroke-width="1.200" fill="none"/></svg>

<span class="t" style="left:5px;top:78px;font-size:9px;color:#e4e4e4">锁定 :</span>
<svg style="left:33.25px;top:78.05px" width="8.70" height="8.70" viewBox="0 0 10 10"><rect x="0.500" y="0.500" width="9" height="9" fill="none" stroke="#9a9a9a" stroke-width="0.800"/><rect x="1" y="1" width="2.700" height="2.700" fill="#c8c8c8"/><rect x="6.300" y="1" width="2.700" height="2.700" fill="#c8c8c8"/><rect x="3.650" y="3.650" width="2.700" height="2.700" fill="#c8c8c8"/><rect x="1" y="6.300" width="2.700" height="2.700" fill="#c8c8c8"/><rect x="6.300" y="6.300" width="2.700" height="2.700" fill="#c8c8c8"/></svg>
<svg style="left:49.32px;top:77.18px" width="9.57" height="10.44" viewBox="0 0 11 12"><path d="M10.500 0.500c-2.500 1.200-4.500 3.500-6 6l1 1c2.200-1.500 4.200-3.800 5-7z" fill="#cfcfcf"/><path d="M3.800 7.200c-1.500 0.400-1.500 2.500-3.300 4c2.200 0.300 4.500-0.700 4.500-2.800z" fill="#cfcfcf"/></svg>
<svg style="left:64.81px;top:77.62px" width="9.57" height="9.57" viewBox="0 0 11 11"><path d="M5.500 0l2 2.500h-4zM5.500 11l2-2.500h-4zM0 5.500l2.500-2v4zM11 5.500l-2.500-2v4z" fill="#e6e6e6"/><path d="M5.500 2v7M2 5.500h7" stroke="#e6e6e6" stroke-width="1.200"/></svg>
<svg style="left:80.81px;top:77.62px" width="9.57" height="9.57" viewBox="0 0 11 11"><path d="M2.500 0v8.500h8.500M0 2.500h2.500" stroke="#e6e6e6" stroke-width="1.200" fill="none"/><path d="M5 2.500h3.500v3.500" stroke="#e6e6e6" stroke-width="1.200" fill="none"/></svg>
<svg style="left:97.25px;top:77.18px" width="8.70" height="10.44" viewBox="0 0 10 12"><path d="M2.500 5.500v-2a2.500 2.500 0 0 1 5 0v2" stroke="#e6e6e6" stroke-width="1.300" fill="none"/><rect x="0.500" y="5.300" width="9" height="6.200" rx="0.800" fill="#e6e6e6"/><rect x="4.300" y="7.300" width="1.400" height="2.300" fill="#444"/></svg>
<span class="t" style="left:114px;top:78px;font-size:9px;color:#e4e4e4">填充 :</span>
<div class="abs" style="left:136px;top:75px;width:30px;height:15px;background:#454545;border:1px solid #3d3d3d"></div>
<span class="t" style="left:139px;top:78px;font-size:8.200px;color:#f0f0f0">100%</span>
<div class="abs" style="left:167px;top:75px;width:10px;height:15px;background:#454545;border:1px solid #3d3d3d"></div>
<svg style="left:168.5px;top:81px" width="7" height="5" viewBox="0 0 7 5"><path d="M0.500 0.800l3 3 3-3" stroke="#c4c4c4" stroke-width="1.200" fill="none"/></svg>

<div class="abs" style="left:0;top:91px;width:180px;height:1px;background:#404040"></div>
<div class="abs" style="left:0;top:92px;width:180px;height:372px;background:#4c4c4c"></div><div class="abs" style="left:1px;top:121px;width:167px;height:58px;background:#545454"></div>
<div class="abs" style="left:1px;top:92px;width:167px;height:29px;background:#6c6c6c"></div>
<div class="abs" style="left:1px;top:121px;width:167px;height:1px;background:#454545"></div>
<div class="abs" style="left:1px;top:149px;width:167px;height:1px;background:#454545"></div>
<div class="abs" style="left:1px;top:178px;width:167px;height:1px;background:#454545"></div>
<svg style="left:6px;top:102.5px" width="12" height="8" viewBox="0 0 12 8"><path d="M0.500 4c2-4.500 9-4.500 11 0c-2 4.500-9 4.500-11 0z" fill="#e6e6e6"/><circle cx="6" cy="4" r="2" fill="#444"/><circle cx="6" cy="4" r="0.900" fill="#e6e6e6"/></svg><svg style="left:6px;top:131.5px" width="12" height="8" viewBox="0 0 12 8"><path d="M0.500 4c2-4.500 9-4.500 11 0c-2 4.500-9 4.500-11 0z" fill="#e6e6e6"/><circle cx="6" cy="4" r="2" fill="#444"/><circle cx="6" cy="4" r="0.900" fill="#e6e6e6"/></svg><svg style="left:6px;top:160px" width="12" height="8" viewBox="0 0 12 8"><path d="M0.500 4c2-4.500 9-4.500 11 0c-2 4.500-9 4.500-11 0z" fill="#e6e6e6"/><circle cx="6" cy="4" r="2" fill="#444"/><circle cx="6" cy="4" r="0.900" fill="#e6e6e6"/></svg>
<svg style="left:24px;top:93px" width="27" height="27" viewBox="0 0 27 27"><defs><pattern id="ck" width="4" height="4" patternUnits="userSpaceOnUse"><rect width="4" height="4" fill="#fff"/><rect width="2" height="2" fill="#d4d4d4"/><rect x="2" y="2" width="2" height="2" fill="#d4d4d4"/></pattern></defs><rect x="0.500" y="0.500" width="26" height="26" fill="none" stroke="#f4f4f4" stroke-width="1"/><rect x="1.500" y="1.500" width="24" height="24" fill="none" stroke="#2e2e2e" stroke-width="1"/><rect x="2" y="2" width="23" height="23" fill="url(#ck)"/><rect x="14.500" y="15" width="12.500" height="12" fill="#3c3c3c"/><rect x="15.500" y="16" width="10.500" height="10" fill="#595959"/><rect x="18" y="18.500" width="6" height="5.500" fill="none" stroke="#e4e4e4" stroke-width="1.100"/><path d="M16.500 17.200h2.500M16.700 17v2.500" stroke="#e4e4e4" stroke-width="0.900"/></svg><svg style="left:24px;top:122.5px" width="27" height="27" viewBox="0 0 27 27"><defs><pattern id="ck" width="4" height="4" patternUnits="userSpaceOnUse"><rect width="4" height="4" fill="#fff"/><rect width="2" height="2" fill="#d4d4d4"/><rect x="2" y="2" width="2" height="2" fill="#d4d4d4"/></pattern></defs><rect x="2" y="2" width="23" height="23" fill="url(#ck)"/><rect x="14.500" y="15" width="12.500" height="12" fill="#3c3c3c"/><rect x="15.500" y="16" width="10.500" height="10" fill="#595959"/><rect x="18" y="18.500" width="6" height="5.500" fill="none" stroke="#e4e4e4" stroke-width="1.100"/><path d="M16.500 17.200h2.500M16.700 17v2.500" stroke="#e4e4e4" stroke-width="0.900"/></svg>
<div class="abs" style="left:25.5px;top:152px;width:23px;height:23px;background:#fff"></div>
<span class="t" style="left:56px;top:103px;font-size:9px;color:#f2f2f2">圆角矩形 1 拷贝</span>
<span class="t" style="left:56px;top:132px;font-size:9px;color:#f2f2f2">圆角矩形 1</span>
<span class="t" style="left:56px;top:160px;font-size:9px;color:#f2f2f2">背景</span>
<svg style="left:147.5px;top:158.5px" width="9" height="11" viewBox="0 0 9 11"><path d="M2.300 5v-1.800a2.200 2.200 0 0 1 4.400 0v1.800" stroke="#d8d8d8" stroke-width="1.100" fill="none"/><rect x="1" y="5" width="7" height="5.300" rx="0.600" stroke="#d8d8d8" stroke-width="1.100" fill="none"/><rect x="4" y="6.800" width="1" height="1.800" fill="#d8d8d8"/></svg>

<div class="abs" style="left:0;top:464px;width:180px;height:1px;background:#444"></div>
<svg style="left:30px;top:471px" width="11" height="6" viewBox="0 0 11 6"><rect x="0.600" y="0.600" width="5.500" height="4.800" rx="2.400" stroke="#7d7d7d" stroke-width="1.200" fill="none"/><rect x="4.900" y="0.600" width="5.500" height="4.800" rx="2.400" stroke="#7d7d7d" stroke-width="1.200" fill="none"/></svg>
<span class="t" style="left:51.5px;top:467.5px;font-size:11.500px;font-style:italic;color:#e4e4e4;letter-spacing:-0.5px">fx</span>
<svg style="left:62px;top:479px" width="3" height="2" viewBox="0 0 3 2"><path d="M0 0h3l-1.500 2z" fill="#d0d0d0"/></svg>
<svg style="left:70px;top:469.5px" width="11" height="9" viewBox="0 0 11 9"><rect x="0" y="0" width="11" height="9" rx="0.800" fill="#e6e6e6"/><circle cx="5.500" cy="4.500" r="2.600" fill="#505050"/></svg>
<svg style="left:90.5px;top:469px" width="10" height="10" viewBox="0 0 10 10"><circle cx="5" cy="5" r="4.300" stroke="#e6e6e6" stroke-width="1.200" fill="none"/><path d="M2 8a4.300 4.300 0 0 1 6-6z" fill="#e6e6e6"/></svg>
<svg style="left:101px;top:479px" width="3" height="2" viewBox="0 0 3 2"><path d="M0 0h3l-1.500 2z" fill="#d0d0d0"/></svg>
<svg style="left:110px;top:469.5px" width="11" height="9" viewBox="0 0 11 9"><path d="M0 1.500h4l1 1.200h6v6.300h-11z" fill="#e6e6e6"/><path d="M0 0.500h4v1h-4z" fill="#e6e6e6"/></svg>
<svg style="left:129.5px;top:469px" width="10" height="10" viewBox="0 0 10 10"><path d="M0.600 0.600h8.800v8.800h-5.400l-3.400-3.400z" stroke="#e6e6e6" stroke-width="1.200" fill="none"/><path d="M0.600 6h3.400v3.400" stroke="#e6e6e6" stroke-width="1" fill="none"/></svg>
<svg style="left:149.5px;top:468.5px" width="9" height="11" viewBox="0 0 9 11"><path d="M0 2.300h9M3 2v-1.400h3v1.400" stroke="#e6e6e6" stroke-width="1.100" fill="none"/><path d="M1 3.500h7l-0.500 7.200h-6z" fill="#e6e6e6"/><path d="M3.300 4.800v4.600M5.700 4.800v4.600" stroke="#555" stroke-width="0.800"/></svg>
</div>
<svg style="left:980px;top:496px" width="20" height="37" viewBox="980 496 20 37"><circle cx="1001" cy="517" r="14" fill="#3bb54a" stroke="#e9f5e6" stroke-width="1.800"/><text x="991" y="515" font-family="Liberation Sans, sans-serif" font-weight="bold" font-size="9.500" fill="#fff">39</text></svg>
<div id="props" class="abs"><div class="abs" style="left:-1px;top:0;width:211px;height:280px">
<div class="abs" style="left:0;top:0;width:209px;height:9px;background:#4a4a4a"></div>
<svg style="left:187px;top:3px" width="7" height="5" viewBox="0 0 7 5"><path d="M3 0.500l-2.200 2l2.200 2zM6.300 0.500l-2.200 2l2.200 2z" fill="#c8c8c8"/></svg>
<svg style="left:201px;top:3px" width="5" height="5" viewBox="0 0 5 5"><path d="M0.700 0.700l3.600 3.600M4.300 0.700l-3.600 3.600" stroke="#c8c8c8" stroke-width="1.100"/></svg>
<div class="abs" style="left:0;top:9px;width:209px;height:21px;background:#424242"></div>
<div class="abs" style="left:0;top:9px;width:32px;height:22px;background:#535353"></div>
<span class="t" style="left:8.5px;top:16px;font-size:8.800px;color:#f0f0f0">属性</span>
<svg style="left:197px;top:17px" width="8" height="6" viewBox="0 0 8 6"><path d="M0 0.700h8M0 3h8M0 5.300h8" stroke="#b8b8b8" stroke-width="1.100"/></svg>
<div class="abs" style="left:0;top:30px;width:210px;height:1px;background:#484848"></div><div class="abs" style="left:205px;top:30px;width:5px;height:248px;background:#4f4f4f;border-left:1px solid #474747"></div><div class="abs" style="left:197px;top:55px;width:8px;height:213px;background:#4d4d4d"></div>
<svg style="left:10.5px;top:35.5px" width="14" height="13" viewBox="0 0 14 13"><rect x="0.500" y="0.500" width="13" height="12" fill="#ebebeb" stroke="#3c3c3c" stroke-width="1"/><circle cx="7" cy="6.500" r="2.800" fill="#2a2a2a"/></svg>
<span class="t" style="left:30.5px;top:38.5px;font-size:9px;color:#e4e4e4">蒙版</span>
<div class="abs" style="left:0;top:54px;width:205px;height:1px;background:#434343"></div>
<div class="abs" style="left:7px;top:60px;width:22px;height:23px;background:#7c7c7c;border:1px solid #8d8d8d"></div>
<div class="abs" style="left:17px;top:70.5px;width:2px;height:2px;background:#fff"></div>
<span class="t" style="left:33px;top:68px;font-size:9px;color:#e4e4e4">形状路径</span>
<svg style="left:162px;top:67px" width="12" height="11" viewBox="0 0 12 11"><rect x="0" y="0" width="8.500" height="7.500" fill="#e6e6e6"/><rect x="1.500" y="1.500" width="5.500" height="4.500" fill="#555"/><rect x="4" y="3.500" width="8" height="7.500" fill="#e6e6e6"/><rect x="6.500" y="6" width="3" height="2.500" fill="#555"/></svg>
<div class="abs" style="left:177px;top:65px;width:15px;height:15px;background:#3a3a3a;border-radius:1px"></div>
<svg style="left:179.5px;top:67.5px" width="10" height="10" viewBox="0 0 10 10"><rect x="1.500" y="1.500" width="7" height="7" stroke="#e6e6e6" stroke-width="1.400" fill="none"/><rect x="0" y="0" width="2.800" height="2.800" fill="#e6e6e6"/><rect x="7.200" y="0" width="2.800" height="2.800" fill="#e6e6e6"/><rect x="0" y="7.200" width="2.800" height="2.800" fill="#e6e6e6"/><rect x="7.200" y="7.200" width="2.800" height="2.800" fill="#e6e6e6"/></svg>
<div class="abs" style="left:0;top:95px;width:197px;height:1px;background:#434343"></div>

<span class="t" style="left:11.5px;top:109.5px;font-size:9px;color:#e4e4e4">浓度 :</span>
<div class="abs" style="left:148.5px;top:108px;width:40px;height:12px;background:#464646;border:1px solid #404040"></div>
<span class="t" style="left:151px;top:109.5px;font-size:8.200px;color:#f0f0f0">100%</span>
<div class="abs" style="left:12px;top:123px;width:176px;height:1px;background:#8a8a8a"></div>
<svg style="left:184.5px;top:124px" width="7" height="6" viewBox="0 0 7 6"><path d="M3.500 0l3.500 4v2h-7v-2z" fill="#f2f2f2"/></svg>

<span class="t" style="left:11.5px;top:148.5px;font-size:9px;color:#e4e4e4">羽化 :</span>
<div class="abs" style="left:148.5px;top:147px;width:40px;height:12px;background:#464646;border:1px solid #404040"></div>
<span class="t" style="left:151px;top:148.5px;font-size:9px;color:#f0f0f0">0.0 像素</span>
<div class="abs" style="left:12px;top:162.5px;width:176px;height:1px;background:#8a8a8a"></div>
<svg style="left:8.5px;top:161.5px" width="7" height="6" viewBox="0 0 7 6"><path d="M3.500 0l3.500 4v2h-7v-2z" fill="#f2f2f2"/></svg>

<span class="t" style="left:8.5px;top:186px;font-size:9px;color:#707070">调整 :</span>
<div class="abs btn" style="left:109px;top:185.5px">选择并遮住 ...</div>
<div class="abs btn" style="left:109px;top:206px">颜色范围 ...</div>
<div class="abs btn" style="left:109px;top:226.5px">反相</div>
<div class="abs" style="left:0;top:253px;width:197px;height:1px;background:#484848"></div>
<div class="abs" style="left:0;top:258px;width:197px;height:1px;background:#494949"></div>
<div class="abs" style="left:0;top:268px;width:210px;height:1px;background:#454545"></div>
<div class="abs" style="left:106px;top:212px;width:97px;height:70px;border-radius:38% 38% 25% 25%;background:#4e4e4e;filter:blur(2px)"></div>
</div></div>
<div id="bottom" class="abs"></div>
</body>
</html>
